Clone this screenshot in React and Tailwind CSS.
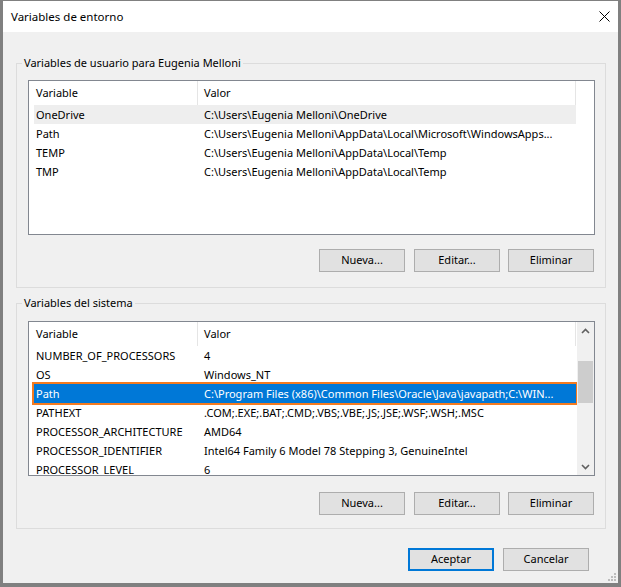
import React from 'react';

const userVars = [
  { name: 'OneDrive', value: 'C:\\Users\\Eugenia Melloni\\OneDrive', state: 'inactive' },
  { name: 'Path', value: 'C:\\Users\\Eugenia Melloni\\AppData\\Local\\Microsoft\\WindowsApps...' },
  { name: 'TEMP', value: 'C:\\Users\\Eugenia Melloni\\AppData\\Local\\Temp' },
  { name: 'TMP', value: 'C:\\Users\\Eugenia Melloni\\AppData\\Local\\Temp' },
];

const systemVars = [
  { name: 'NUMBER_OF_PROCESSORS', value: '4' },
  { name: 'OS', value: 'Windows_NT' },
  { name: 'Path', value: 'C:\\Program Files (x86)\\Common Files\\Oracle\\Java\\javapath;C:\\WIN...', state: 'active' },
  { name: 'PATHEXT', value: '.COM;.EXE;.BAT;.CMD;.VBS;.VBE;.JS;.JSE;.WSF;.WSH;.MSC' },
  { name: 'PROCESSOR_ARCHITECTURE', value: 'AMD64' },
  { name: 'PROCESSOR_IDENTIFIER', value: 'Intel64 Family 6 Model 78 Stepping 3, GenuineIntel' },
  { name: 'PROCESSOR_LEVEL', value: '6' },
];

const WinButton = ({ children, primary, className = '' }) => (
  <button
    className={`flex h-[23px] w-[86px] items-center justify-center bg-[#e1e1e1] text-[11px] text-black ${
      primary ? 'border-2 border-[#0078d7]' : 'border border-[#adadad]'
    } ${className}`}
  >
    {children}
  </button>
);

const Scrollbar = () => (
  <div className="flex w-[17px] flex-col bg-[#f0f0f0]">
    {/* up arrow */}
    <div className="flex h-[17px] items-center justify-center">
      <svg width="9" height="6" viewBox="0 0 9 6">
        <path d="M1 5 L4.5 1.5 L8 5" fill="none" stroke="#606060" strokeWidth="1.6" />
      </svg>
    </div>
    <div className="flex-1">
      <div className="mx-auto mt-[22px] h-[42px] w-[15px] bg-[#cdcdcd]" />
    </div>
    {/* down arrow */}
    <div className="flex h-[17px] items-center justify-center">
      <svg width="9" height="6" viewBox="0 0 9 6">
        <path d="M1 1 L4.5 4.5 L8 1" fill="none" stroke="#606060" strokeWidth="1.6" />
      </svg>
    </div>
  </div>
);

const ListView = ({ rows, scroll }) => (
  <div className="flex h-[155px] w-[567px] overflow-hidden border border-[#828790] bg-white">
    <div className="flex-1 overflow-hidden">
      {/* Header */}
      <div className="flex h-[24px] leading-[24px]">
        <div className="w-[169px] border-r border-[#e5e5e5] pl-[7px]">Variable</div>
        <div className="w-[378px] border-r border-[#e5e5e5] pl-[6px]">Valor</div>
      </div>
      {rows.map((r) => (
        <div
          key={r.name}
          className={`ml-[5px] flex h-[19px] w-[542px] leading-[19px] ${
            r.state === 'active'
              ? 'bg-[#0078d7] text-white outline-2 outline-[#f47b20]'
              : r.state === 'inactive'
              ? 'bg-[#eeeeee]'
              : ''
          }`}
        >
          <div className="w-[168px] shrink-0 overflow-hidden whitespace-nowrap pl-[2px]">{r.name}</div>
          <div className="flex-1 overflow-hidden whitespace-nowrap pl-[2px]">{r.value}</div>
        </div>
      ))}
    </div>
    {scroll && <Scrollbar />}
  </div>
);

const Group = ({ title, rows, scroll, className = '', listGap }) => (
  <fieldset className={`ml-[13px] w-[590px] border border-[#dcdcdc] pl-[11px] pr-[10px] ${className}`}>
    <legend className="-ml-[6px] px-[2px] leading-[16px]">{title}</legend>
    <ListView rows={rows} scroll={scroll} />
    <div className={`flex justify-end pr-[1px] ${listGap}`}>
      <WinButton>Nueva...</WinButton>
      <WinButton className="ml-[9px]">Editar...</WinButton>
      <WinButton className="ml-[8px]">Eliminar</WinButton>
    </div>
  </fieldset>
);

export default function App() {
  return (
    <div className="h-[587px] w-[621px] border-b-[4px] border-l-[3px] border-r-[3px] border-t border-[#808080] font-['Segoe_UI','Noto_Sans',sans-serif] text-[11px] text-black">
      {/* Title bar */}
      <div className="flex h-[31px] items-center justify-between bg-white pl-[8px] pr-[8px]">
        <span className="text-[11.5px]">Variables de entorno</span>
        <svg width="11" height="11" viewBox="0 0 11 11">
          <path d="M0.5 0.5 L10.5 10.5 M10.5 0.5 L0.5 10.5" stroke="#000" strokeWidth="1" />
        </svg>
      </div>

      {/* Body */}
      <div className="relative h-[551px] bg-[#f0f0f0] pt-[23px]">
        <Group
          title="Variables de usuario para Eugenia Melloni"
          rows={userVars}
          className="pt-[9px] pb-[15px]"
          listGap="mt-[14px]"
        />
        <Group
          title="Variables del sistema"
          rows={systemVars}
          scroll
          className="mt-[7px] pt-[10px] pb-[13px]"
          listGap="mt-[16px]"
        />

        <div className="mt-[19px] flex justify-end gap-[9px] pr-[29px]">
          <WinButton primary>Aceptar</WinButton>
          <WinButton>Cancelar</WinButton>
        </div>

        {/* resize grip */}
        <svg className="absolute bottom-[1px] right-[1px]" width="10" height="10" viewBox="0 0 10 10">
          <rect x="7" y="1" width="2" height="2" fill="#bcbcbc" />
          <rect x="4" y="4" width="2" height="2" fill="#bcbcbc" />
          <rect x="7" y="4" width="2" height="2" fill="#bcbcbc" />
          <rect x="1" y="7" width="2" height="2" fill="#bcbcbc" />
          <rect x="4" y="7" width="2" height="2" fill="#bcbcbc" />
          <rect x="7" y="7" width="2" height="2" fill="#bcbcbc" />
        </svg>
      </div>
    </div>
  );
}
